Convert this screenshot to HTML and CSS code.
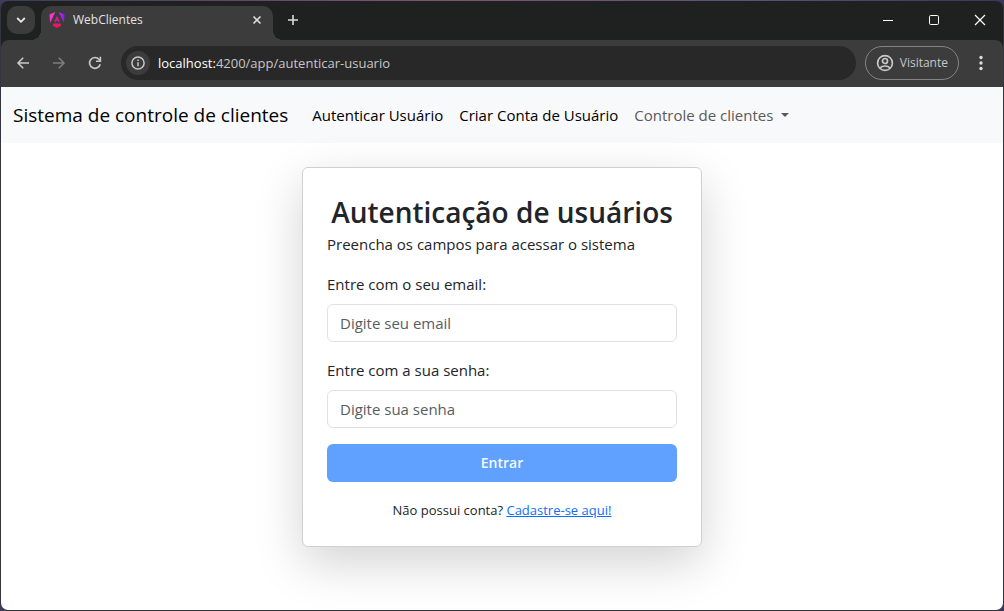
FILE: index.html
```html
<!DOCTYPE html>
<html lang="pt-BR">
<head>
<meta charset="utf-8">
<title>WebClientes</title>
<link rel="stylesheet" href="styles.css">
</head>
<body>
<div class="window">
  <header class="tabstrip">
    <button class="tab-search" aria-label="Pesquisar guias">
      <svg width="12" height="12" viewBox="0 0 12 12"><path d="M2.200 4 6 7.800 9.800 4" fill="none" stroke="currentColor" stroke-width="1.800"/></svg>
    </button>
    <div class="tab">
      <svg class="tab-logo" width="16" height="16" viewBox="0 0 16 16">
        <defs>
          <linearGradient id="brand" x1="0" y1="0" x2="1" y2="0"><stop offset="0" stop-color="#d51fe0"/><stop offset="1" stop-color="#7a1cf8"/></linearGradient>
          <linearGradient id="base" x1="0" y1="0" x2="0" y2="1"><stop offset="0" stop-color="#e8178c"/><stop offset="1" stop-color="#ff1030"/></linearGradient>
        </defs>
        <path d="M6.200 0 .4 2.500l.8 8.500z" fill="#f637c8"/>
        <path d="m9.800 0 5.800 2.500-.8 8.500z" fill="url(#brand)"/>
        <path d="M8 4.400 5.600 9.500h1.200L8 6.900l1.200 2.600h1.200z" fill="#e8199d" stroke="#e8199d" stroke-width=".5"/>
        <path d="M4.700 11.600h6.600l.9 1.900L8 15.900l-4.200-2.400z" fill="url(#base)"/>
      </svg>
      <span class="tab-title">WebClientes</span>
      <button class="plain" aria-label="Fechar guia">
        <svg width="12" height="12" viewBox="0 0 12 12"><path d="m2.500 2.500 7 7m0-7-7 7" stroke="currentColor" stroke-width="1.600"/></svg>
      </button>
    </div>
    <button class="plain new-tab" aria-label="Nova guia">
      <svg width="12" height="12" viewBox="0 0 12 12"><path d="M6 1v10M1 6h10" stroke="currentColor" stroke-width="1.600"/></svg>
    </button>
    <div class="window-controls">
      <button class="plain" aria-label="Minimizar"><svg width="12" height="12" viewBox="0 0 12 12"><path d="M1 6.500h10" stroke="currentColor"/></svg></button>
      <button class="plain" aria-label="Maximizar"><svg width="12" height="12" viewBox="0 0 12 12"><rect x="1.500" y="1.500" width="9" height="9" rx="1.200" fill="none" stroke="currentColor"/></svg></button>
      <button class="plain" aria-label="Fechar"><svg width="12" height="12" viewBox="0 0 12 12"><path d="m1 1 10 10M11 1 1 11" stroke="currentColor" stroke-width="1.200"/></svg></button>
    </div>
  </header>
  <div class="toolbar">
    <div class="history">
      <button class="plain" aria-label="Voltar"><svg width="14" height="14" viewBox="0 0 14 14"><path d="M13 7H2m5.200-5.200L2 7l5.200 5.200" fill="none" stroke="currentColor" stroke-width="1.600"/></svg></button>
      <button class="plain" aria-label="Avançar" disabled><svg width="14" height="14" viewBox="0 0 14 14"><path d="M1 7h11M6.800 1.800 12 7l-5.200 5.200" fill="none" stroke="currentColor" stroke-width="1.600"/></svg></button>
      <button class="plain" aria-label="Recarregar"><svg width="14" height="14" viewBox="0 0 14 14"><path d="M12.200 8.200A5.400 5.400 0 1 1 11 3.300l1.200 1.400" fill="none" stroke="currentColor" stroke-width="1.700"/><path d="M12.400.8v4.400H8" fill="none" stroke="currentColor" stroke-width="1.600"/></svg></button>
    </div>
    <div class="address">
      <button class="site-info" aria-label="Informações do site"><svg width="14" height="14" viewBox="0 0 14 14"><circle cx="7" cy="7" r="6.100" fill="none" stroke="currentColor" stroke-width="1.500"/><path d="M7 6.300v4M7 3.400V5" stroke="currentColor" stroke-width="1.500"/></svg></button>
      <span class="url"><span class="host">localhost:</span>4200/app/autenticar-usuario</span>
    </div>
    <button class="profile">
      <svg width="18" height="18" viewBox="0 0 18 18"><g fill="none" stroke="currentColor" stroke-width="1.700"><circle cx="9" cy="9" r="7.400"/><circle cx="9" cy="7" r="2.500"/><path d="M3.700 14.100c2.900-2.800 7.700-2.800 10.600 0"/></g></svg>
      Visitante
    </button>
    <button class="plain menu" aria-label="Menu"><svg width="4" height="16" viewBox="0 0 4 16"><g fill="currentColor"><circle cx="2" cy="2.500" r="1.700"/><circle cx="2" cy="8" r="1.700"/><circle cx="2" cy="13.500" r="1.700"/></g></svg></button>
  </div>
  <div class="page">
    <nav class="navbar">
      <a class="brand" href="#">Sistema de controle de clientes</a>
      <a class="nav-link" href="#">Autenticar Usuário</a>
      <a class="nav-link" href="#">Criar Conta de Usuário</a>
      <a class="nav-link dropdown" href="#">Controle de clientes</a>
    </nav>
    <main class="card">
      <h1 class="title">Autenticação de usuários</h1>
      <p class="lead">Preencha os campos para acessar o sistema</p>
      <form class="form">
        <div class="field">
          <label for="email">Entre com o seu email:</label>
          <input id="email" type="email" placeholder="Digite seu email">
        </div>
        <div class="field">
          <label for="senha">Entre com a sua senha:</label>
          <input id="senha" type="password" placeholder="Digite sua senha">
        </div>
        <button class="submit" type="submit" disabled>Entrar</button>
      </form>
      <p class="signup">Não possui conta? <a href="#">Cadastre-se aqui!</a></p>
    </main>
  </div>
</div>
</body>
</html>
```
FILE: styles.css
```css
* { box-sizing: border-box; }

body {
  margin: 0;
  background: linear-gradient(90deg, #3f3b5c, #80566f 45%, #5a5278 75%, #3c355c);
  font-family: "Open Sans", "Noto Sans", sans-serif;
  font-size: 15px;
  line-height: 24px;
  color: #212529;
}

h1, p { margin: 0; }
button, input { font: inherit; }
svg { display: block; flex: none; }

.window {
  display: flex;
  flex-direction: column;
  min-height: 100vh;
  border: 1px solid #34343f;
  border-top-color: transparent;
  border-radius: 8px;
  background: #1f2121 padding-box;
  overflow: hidden;
}

.plain {
  display: flex;
  align-items: center;
  justify-content: center;
  width: 20px;
  height: 20px;
  padding: 0;
  border: 0;
  background: none;
  color: #dcdcdc;
}

.tabstrip {
  display: flex;
  align-items: center;
  height: 39px;
  padding: 0 0 1px 6px;
}

.tab-search {
  display: flex;
  align-items: center;
  justify-content: center;
  width: 28px;
  height: 28px;
  padding: 0;
  border: 0;
  border-radius: 10px;
  background: #3c3c3c;
  color: #e8e8e8;
}

.tab {
  position: relative;
  display: flex;
  align-items: center;
  align-self: flex-start;
  gap: 8px;
  width: 232px;
  height: 34px;
  margin: 5px 0 0 6px;
  padding: 0 6px 6px 8px;
  border-radius: 10px 10px 0 0;
  background: #3c3c3c;
  color: #e3e3e3;
  font-size: 12px;
}

.tab::before,
.tab::after {
  content: "";
  position: absolute;
  bottom: 0;
  width: 10px;
  height: 10px;
}

.tab::before {
  right: 100%;
  background: radial-gradient(circle at 0 0, transparent 10px, #3c3c3c 10px);
}

.tab::after {
  left: 100%;
  background: radial-gradient(circle at 100% 0, transparent 10px, #3c3c3c 10px);
}

.tab-title { flex: 1; }
.new-tab { margin-left: 10px; }

.window-controls {
  display: flex;
  gap: 26px;
  margin-left: auto;
  padding-right: 13px;
}

.window-controls .plain { color: #fff; }

.toolbar {
  display: flex;
  align-items: center;
  height: 47px;
  padding: 0 12px 1px;
  border-radius: 8px 8px 0 0;
  background: #3c3c3c;
}

.history {
  display: flex;
  gap: 16px;
  margin-right: 16px;
}

.history .plain { color: #c7c7c7; }
.history .plain:disabled { color: #7d7d7d; }

.address {
  display: flex;
  flex: 1;
  align-items: center;
  gap: 8px;
  height: 34px;
  padding: 0 5px;
  border-radius: 17px;
  background: #282828;
  color: #c7c7c7;
  font-size: 13px;
}

.site-info {
  display: flex;
  align-items: center;
  justify-content: center;
  width: 24px;
  height: 24px;
  padding: 0;
  border: 0;
  border-radius: 50%;
  background: #3c3c3c;
  color: #c7c7c7;
}

.host { color: #fff; }

.profile {
  display: flex;
  align-items: center;
  gap: 6px;
  height: 34px;
  margin-left: 9px;
  padding: 0 10px;
  border: 1px solid #848484;
  border-radius: 17px;
  background: none;
  color: #c7c7c7;
  font-size: 12px;
}

.menu { margin-left: 12px; }

.page {
  flex: 1;
  background: #fff;
}

.navbar {
  display: flex;
  align-items: center;
  gap: 16px;
  height: 56px;
  padding: 0 12px;
  background: #f8f9fa;
}

.navbar a { text-decoration: none; color: #000; }

.navbar .brand {
  margin-right: 8px;
  font-size: 19px;
}

.navbar .dropdown {
  display: flex;
  align-items: center;
  gap: 8px;
  color: #595a5b;
}

.dropdown::after {
  content: "";
  border: 4px solid transparent;
  border-top-color: currentColor;
  border-bottom: 0;
}

.card {
  width: 400px;
  max-width: 100%;
  margin: 24px auto 0;
  padding: 24px;
  border: 1px solid #d0d0d0;
  border-radius: 6px;
  background: #fff;
  box-shadow: 0 16px 48px rgba(0, 0, 0, .175);
}

.title {
  font-size: 28px;
  font-weight: 600;
  line-height: 40px;
  text-align: center;
  white-space: nowrap;
}

.form {
  display: flex;
  flex-direction: column;
  gap: 16px;
  margin-top: 16px;
}

.field {
  display: flex;
  flex-direction: column;
  gap: 8px;
}

.field input {
  height: 38px;
  padding: 0 12px;
  border: 1px solid #dee2e6;
  border-radius: 6px;
  background: #fff;
}

.field input::placeholder { color: #595c5f; opacity: 1; }

.submit {
  height: 38px;
  border: 0;
  border-radius: 6px;
  background: #60a0ff;
  color: #f4f8ff;
  font-size: 14px;
  font-weight: 600;
}

.signup {
  margin-top: 16px;
  font-size: 13px;
  text-align: center;
}

.signup a { color: #0d6efd; }
```
